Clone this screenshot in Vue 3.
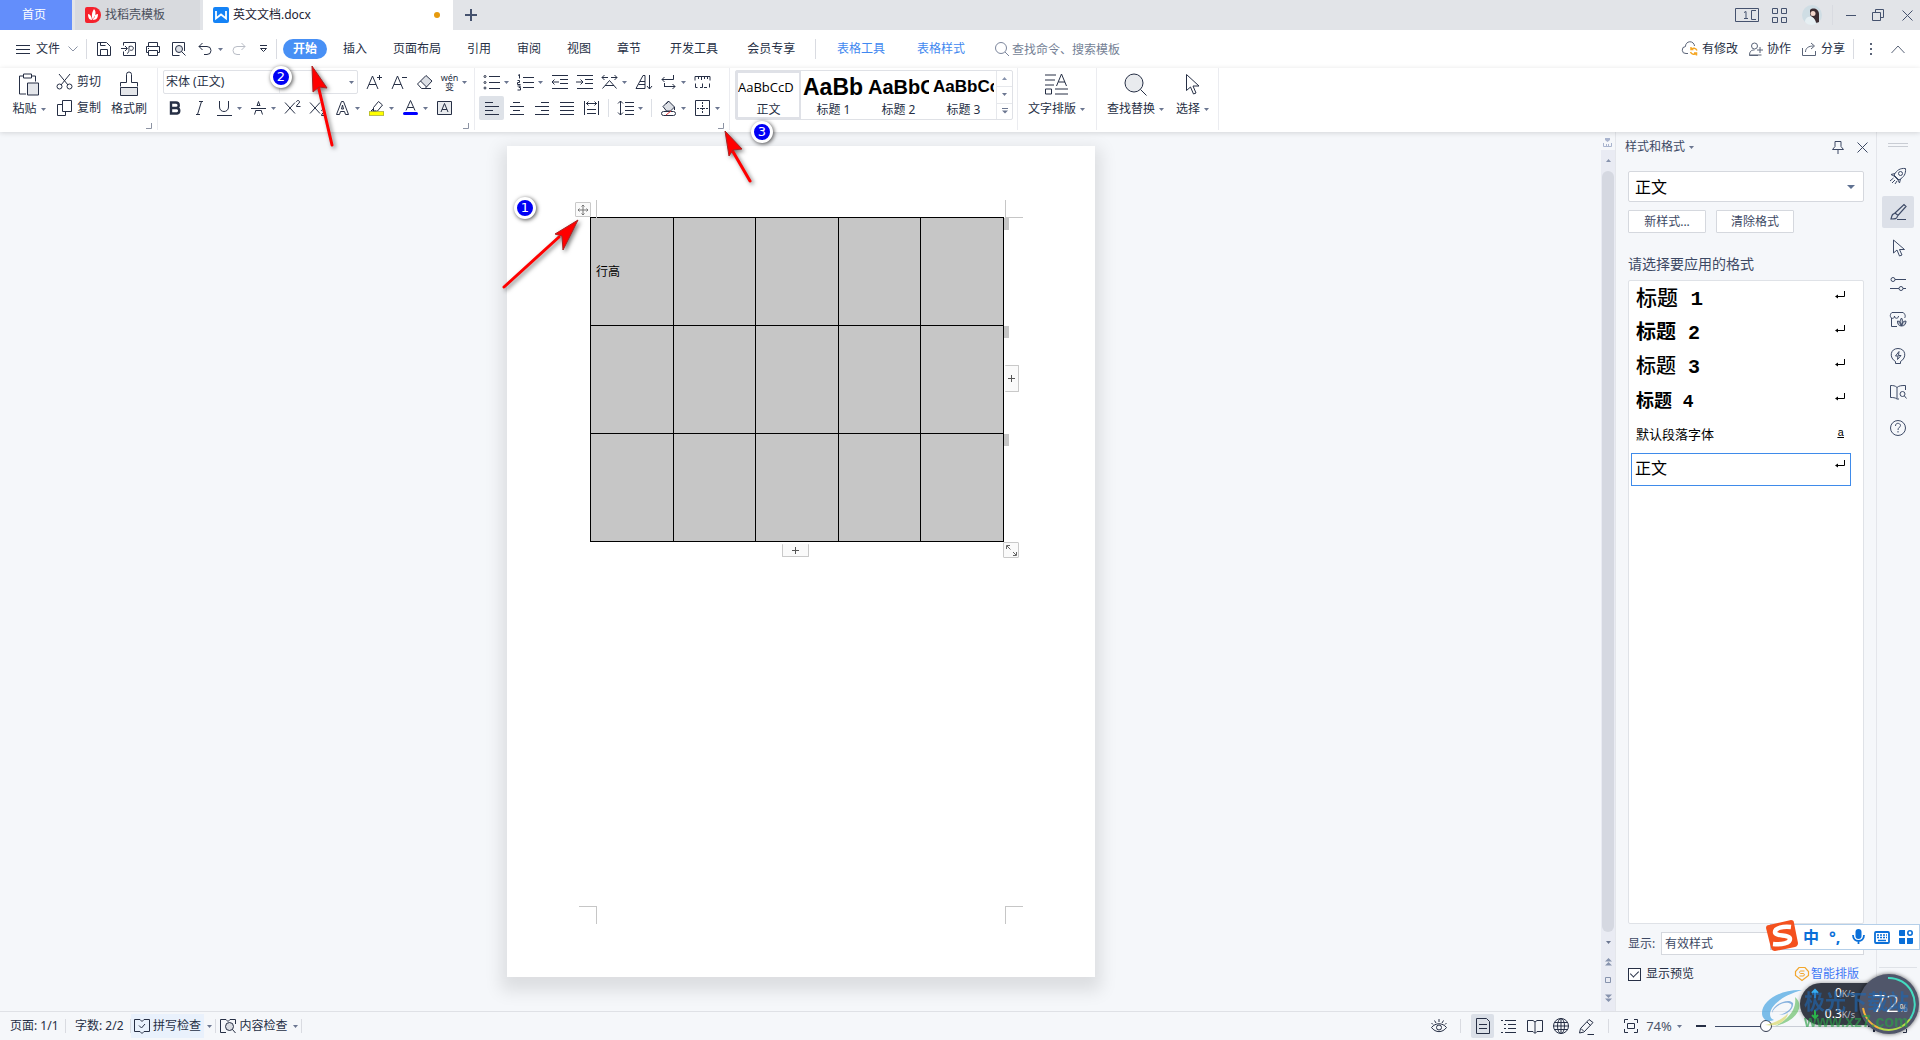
<script setup>
import { h, ref } from 'vue'

const icons = {
  docer: [16, 16, '<path d="M2 0h6a8 8 0 0 1 0 16H2a2 2 0 0 1-2-2V2a2 2 0 0 1 2-2z" fill="#f5222d" stroke="none"/><path d="M9 2c3 3 1 8-1 11C6 9 7 5 9 2zM3 7c2 0 4 3 4 6-3 0-4-3-4-6zM13 7c-3 0-4 3-5 6 4 0 5-3 5-6z" fill="#fff" stroke="none"/>'],
  wdoc: [16, 16, '<rect width="16" height="16" rx="2" fill="#1583f6" stroke="none"/><path d="M3 4v7.500l5-4 5 4V4" stroke="#fff" stroke-width="1.800"/>'],
  plus: [12, 12, '<path d="M6 0v12M0 6h12" stroke-width="2"/>'],
  layout: [24, 14, '<path d="M.5.5h23v13H.5zM21 2.500h-4.500v9H21M19 11.500h2M9 4.500l2-1v7M9 10.500h4"/>'],
  grid: [15, 15, '<path d="M.5.5h5v5h-5zM9.500.5h5v5h-5zM.5 9.500h5v5h-5zM9.500 9.500h5v5h-5z"/>'],
  avatar: [20, 20, '<circle cx="10" cy="10" r="10" fill="#cfdde4" stroke="none"/><path d="M8 5c3-3 9-1 9 4v8c-3 2-5 0-5-3l-4-4z" fill="#3b2b30" stroke="none"/><circle cx="11" cy="8.500" r="2.500" fill="#f3d6cb" stroke="none"/><path d="M3 17c0-4 3-6 7-5 2 1 4 3 4 7-4 2-9 1-11-2z" fill="#e6eff3" stroke="none"/>'],
  min: [10, 12, '<path d="M0 6.500h10"/>'],
  restore: [12, 12, '<path d="M.5 3.500h8v8h-8zM3.500 3.500v-3h8v8h-3"/>'],
  close: [11, 11, '<path d="M.5.5l10 10M10.500.5l-10 10"/>'],
  menu: [14, 11, '<path d="M0 1.500h14M0 5.500h14M0 9.500h14"/>'],
  down: [10, 6, '<path d="M.5.5L5 5 9.500.5" stroke="#8b93a5"/>'],
  up: [14, 9, '<path d="M.5 8L7 1l6.500 7"/>'],
  save: [16, 16, '<path d="M1.500 1.500h9l4 4v9h-13zM4.500 14V8.500h7V14M4.500 1.500v3h5"/>'],
  output: [16, 16, '<path d="M2.500 4.500v-3h12v13h-12v-4M0 7.500h6M4 5l2.500 2.500L4 10M6 12.500c2-1 2-2 2-7 4-1 5 1 4 3-1 1-2 1-3 .5"/>'],
  print: [16, 16, '<path d="M3.500 5V1.500h9V5M3.500 11.500h-2v-6h13v6h-2M3.500 9.500h9v5h-9zM3 7.500h1"/>'],
  preview: [16, 16, '<path d="M14.500 10V1.500h-12v13h7"/><circle cx="9" cy="8" r="3.500" fill="#dcdfe5"/><path d="M11.500 10.500l4 4"/>'],
  undo: [14, 14, '<path d="M4.500 1L1 4.500 4.500 8M1 4.500h8a4 4 0 0 1 0 8H6"/>'],
  redo: [14, 14, '<path d="M9.500 1L13 4.500 9.500 8M13 4.500H5a4 4 0 0 0 0 8h3" stroke="#b9bdc6"/>'],
  more: [9, 8, '<path d="M1 .5h7M1.500 3.500l3 3 3-3z" fill="#fff"/>'],
  search: [14, 14, '<circle cx="6" cy="6" r="5.500"/><path d="M10 10l4 4"/>'],
  cloud: [16, 14, '<path d="M6 11.500H4a3.500 3.500 0 0 1-.5-7 4.500 4.500 0 0 1 9-.5"/><path d="M15 8.500a3.500 3.500 0 0 0-6-1M8.500 10a3.500 3.500 0 0 0 6 1M9 5v2.500h2.500M14.500 13.500V11H12" stroke="#f5a623" stroke-width="1.500"/>'],
  person: [14, 14, '<circle cx="5.500" cy="4" r="3"/><path d="M9 13.500H.5c0-4 1.500-5.500 5-5.500M12.500 13H.5M11 5v6M8 8h6"/>'],
  share: [15, 14, '<path d="M.5 6v7.500h13V9M3.500 10c0-4 3-6 8-6M9 1l3.500 3L9 7"/>'],
  dots: [3, 12, '<path d="M0 1h2M0 6h2M0 11h2" stroke-width="2"/>'],
  paste: [22, 24, '<path d="M8 21.500H1.500v-18h4v-2h8v2h4V9M5.500 3.500v2h8v-2"/><path d="M9.500 10.500h11v12h-11z" fill="#e4e6ea"/>'],
  cut: [17, 16, '<path d="M3 0l9 11M14 0L5 11"/><circle cx="3.500" cy="12.500" r="2.500"/><circle cx="13.500" cy="12.500" r="2.500"/>'],
  copy: [17, 16, '<path d="M6.500.5h9v11h-9zM6 4.500H1.500v11h8V12"/>'],
  brush: [18, 25, '<path d="M.5 14.500v-4h6v-8a2 2 0 0 1 5 0v8h6v4"/><path d="M.5 15.500h17v8H.5z" fill="#e4e6ea"/>'],
  fontUp: [17, 16, '<path d="M1 15L6.500 2 12 15M3 10.500h7M11 3.500h5M13.500 1v5"/>'],
  fontDown: [17, 16, '<path d="M1 15L6.500 2 12 15M3 10.500h7M11 3.500h5"/>'],
  eraser: [17, 16, '<path d="M4.500 7L10 1.500l6 5.500-5.500 6z" fill="#dcdfe5"/><path d="M4.500 7L1.500 10l4 4.500H9l1.500-1.500M9 14.500h6"/>'],
  bold: [17, 16, '<path d="M5 2.500h5a2.700 2.700 0 0 1 0 5.500H5zM5 8h6a2.800 2.800 0 0 1 0 5.500H5z" stroke-width="2.400"/>'],
  italic: [17, 16, '<path d="M8 1.500h4M5 14.500h4M10.500 1.500l-4 13"/>'],
  underline: [17, 16, '<path d="M3.500 1v6c0 6 9 6 9 0V1M1 15.500h15"/>'],
  strike: [17, 16, '<path d="M4.500 14.500L6 10M7 6l1.500-4.500L10 6M11 10l1.500 4.500M1 8.500h15M6 10.500h5M7 5.500h3"/>'],
  sup: [17, 16, '<path d="M1 2.500l10 11M11 2.500l-10 11M12.500 2c0-2 3-2 3 0s-3 2-3 4.500h4"/>'],
  sub: [17, 16, '<path d="M1 2.500l10 11M11 2.500l-10 11M12.500 11c0-2 3-2 3 0s-3 2-3 4.500h4"/>'],
  outlineA: [17, 16, '<path d="M2.500 14.500l5-13h2l5 13h-3l-1-3h-4l-1 3zM7.500 9h2l-1-4z"/>'],
  marker: [17, 16, '<path d="M5.500 7.500l5-6 4 3.500-5 6-4 .5zM5 9l-2 2h5"/><path d="M1 13.500h15" stroke="#8a8f3a" stroke-width="4.500"/><path d="M1.500 13.500h14" stroke="#ff0" stroke-width="3.500"/>'],
  colorA: [17, 16, '<path d="M4 10.500L8.500.5l4.500 10M5.500 7.500h6"/><path d="M2.500 13.500h12" stroke="#00f" stroke-width="3" stroke-linecap="round"/>'],
  boxA: [17, 16, '<path d="M1.500 1.500h14v13h-14z" fill="#e9ebee"/><path d="M5 12l3.500-8.500L12 12M6 9.500h5"/>'],
  bullets: [17, 16, '<path d="M6 2.500h11M6 8.500h11M6 14.500h11"/><circle cx="2" cy="2.500" r="1"/><circle cx="2" cy="8.500" r="1"/><circle cx="2" cy="14" r="1"/>'],
  numbers: [17, 16, '<path d="M6 3.500h11M6 8.500h11M6 13.500h11M1 1.500l1.500-1v4M.5 6.500h2v2h-2v2h3M.5 12h3l-1.500 1.500h1.500V16H.5"/>'],
  outdent: [17, 16, '<path d="M1 1.500h16M9 5.500h8M9 9.500h8M1 14.500h16M1 8h7M3.500 5.500L1 8l2.500 2.500"/>'],
  indent: [17, 16, '<path d="M1 1.500h16M9 5.500h8M9 9.500h8M1 14.500h16M0 8h7M4.500 5.500L7 8l-2.500 2.500"/>'],
  scaleA: [17, 16, '<path d="M1.500 14.500l7-8 7 8M4 11.500h9M1 3.500h6M3.500 1L1 3.500 3.500 6M10 3.500h6M13.500 1L16 3.500 13.500 6"/>'],
  sort: [17, 16, '<path d="M1 14.500L8 1.500h2v13M1 14.500h9M3.500 10.500H10M5 7.500h5"/><path d="M14.500 1v14M12 12l2.500 3 2.500-3"/>'],
  wrap: [17, 16, '<path d="M13.500 1v4.500H2M4.500 3L2 5.500 4.500 8M4 12.500h11M12.500 10l2.500 2.500-2.500 2.500M4.500 9v3.500"/>'],
  tabs: [17, 16, '<path d="M1 6.500v-4h15v4M4.500 2.500V5M7.500 2.500V6M10.500 2.500V5M13.500 2.500V5M1.500 9.500v4h2M6 13.500h2.500v-4M10 13.500h3M15.500 9.500v4"/>'],
  left: [17, 16, '<path d="M2 2.500h8M2 6.500h14M2 10.500h8M2 14.500h14"/>'],
  center: [17, 16, '<path d="M5 2.500h7M2 6.500h14M5 10.500h7M2 14.500h14"/>'],
  right: [17, 16, '<path d="M8 2.500h8M2 6.500h14M8 10.500h8M2 14.500h14"/>'],
  justify: [17, 16, '<path d="M2 2.500h14M2 6.500h14M2 10.500h14M2 14.500h14"/>'],
  distribute: [17, 16, '<path d="M1.500 1v14M15.500 1v14M3 3.500h11M5.500 1.500L3.500 3.500l2 2M11.500 1.500l2 2-2 2M4 9.500h9M4 13.500h9"/>'],
  spacing: [17, 16, '<path d="M3.500 1v14M1 3.500L3.500 1 6 3.500M1 12.500L3.500 15 6 12.500M8 2.500h9M8 6.500h9M8 10.500h9M8 14.500h9"/>'],
  shade: [17, 16, '<path d="M3 6.500l5.500-5.500 6 6-4 4h-4z" fill="#dcdfe5"/><path d="M6 4l3-3M14.500 7v3"/><rect x="1.500" y="11.500" width="14" height="4" rx="2" fill="#fff"/><path d="M6 15l5-4" stroke="#e23a3a"/>'],
  border: [17, 16, '<path d="M1.500.5h14v15h-14z"/><path d="M8.500 2v12M3 8.500h11" stroke-dasharray="2 1"/>'],
  typeset: [24, 22, '<path d="M0 1.500h11M0 6.500h10M0 11.500h9M.5 15.500h6v5h-6zM10 15.500h13M10 20.500h13M11.500 12.500l5-12 5 12M13.500 8.500h6.500"/>'],
  find: [23, 23, '<circle cx="10" cy="10" r="9" fill="#e9ebee"/><path d="M16.500 16.500l6 6"/>'],
  cursor: [16, 22, '<path d="M1.500 1v16l4-3.500 3 7 2.500-1-3-7h6z"/>'],
  caret: [5, 3, '<path d="M0 0h5L2.500 3z" fill="#6b7690" stroke="none"/>'],
  bigCaret: [8, 4, '<path d="M0 0h8L4 4z" fill="#5f7191" stroke="none"/>'],
  caretUp: [5, 3, '<path d="M0 3h5L2.500 0z" fill="#8793ad" stroke="none"/>'],
  caretMore: [6, 6, '<path d="M0 .5h6" stroke="#6b7690"/><path d="M0 2.500h6l-3 3z" fill="#6b7690" stroke="none"/>'],
  launch: [6, 6, '<path d="M5.500 0v5.500H0" stroke="#8c93a3"/>'],
  ruler: [9, 9, '<path d="M2 0h5v2L4.500 4 2 2z" fill="#a9b4ce" stroke="none"/><path d="M.5 5v3.500h8V5M3.500 6v2M5.500 6v2" stroke="#a9b4ce"/>'],
  dblUp: [7, 8, '<path d="M0 3.500h7L3.500 0zM0 7.500h7L3.500 4z" fill="#8793ad" stroke="none"/>'],
  dblDown: [7, 8, '<path d="M0 .5h7L3.500 4zM0 4.500h7L3.500 8z" fill="#8793ad" stroke="none"/>'],
  square: [6, 6, '<path d="M.5.5h5v5h-5z" stroke="#8793ad"/>'],
  pin: [14, 13, '<path d="M4 .5h6v5l2.500 3h-11l2.500-3zM7 9v4"/>'],
  enter: [10, 9, '<path d="M9.500 0v5.500H2" stroke="#000"/><path d="M0 5.500L3 3.500v4z" fill="#000" stroke="none"/>'],
  rocket: [18, 18, '<path d="M5 8c3-5 6-7 11.500-6.500C17 7 15 10 10 13z"/><circle cx="11.500" cy="6.500" r="2"/><path d="M6 6.500l-4 1 3 1.500 4 4 1.500 3 1-4M4.500 11L1 14M6 13l-3 3M8 14l-2 3"/>'],
  pen: [18, 18, '<path d="M6 10l9-8.500 2 2-8 9zM6 10.500c-3 0-3 2-4 5.500 4 0 6 0 6.500-3M8 16.500h9" stroke-width="1.200"/>'],
  pointer: [18, 18, '<path d="M4.500 1v13l3.500-3 2.500 6 2.500-1-2.500-5.500h5z"/>'],
  sliders: [18, 18, '<circle cx="4" cy="4.500" r="2"/><path d="M6 4.500h11M1 13.500h9M14 13.500h3"/><circle cx="12" cy="13.500" r="2"/>'],
  shop: [18, 18, '<path d="M2.500 7v8.500H8M2.500 7C0 5 2 2 3 1.500h11c2 1 3 4 1.500 5.500M2.500 7c1.500 1 3 0 3-2 0 3 4 3 4 0"/><path d="M12.500 7c2 3 1 6 0 8-2-2-2-5 0-8zM8.500 10c2 0 4 2 4 5-3 0-4-2-4-5zM17 10c-3 0-4 2-4.500 5 3 0 4.500-2 4.500-5z" fill="#c7ccd6"/>'],
  bulb: [18, 18, '<path d="M6.500 14.500C0 11 1 1.500 9 1.500s9 9.500 2.500 13v2h-5zM10 4.500L6.500 9H9l-.5 3.500L12 8.500H9.500z"/>'],
  reader: [18, 18, '<path d="M8 15.500V4.500C6 2.500 4 2.500 1.500 2.500v12c2.500 0 4.500 0 6.500 1.500h2M8 4.500c2-2 5-2 8.500-2V7"/><circle cx="13.500" cy="11" r="2.500"/><path d="M15.500 13l2 2.500"/>'],
  help: [18, 18, '<circle cx="9" cy="9" r="7.500"/><path d="M6.500 7c0-4 5-3 5-.5C11.500 8.500 9 8 9 11M9 12v1.500" />'],
  spell: [16, 16, '<path d="M6 1.500H.5v12H6l2 2 2-2h5.500v-12H10l-2 2-2-2M5 7.500L7.500 10 11 6"/>'],
  content: [16, 16, '<path d="M6 1.500H.5v13H6M10 1.500h5.500V6M6 1.500l2 2 2-2"/><circle cx="9.500" cy="8.500" r="4" fill="#d9dce2"/><path d="M12.500 11.500l3 3.500"/>'],
  eye: [16, 16, '<path d="M.5 9.500c4-5 11-5 15 0-4 5.500-11 5.500-15 0zM8 1v3M3.500 2.500L5 5M12.500 2.500L11 5M.5 5L2 6.500M15.500 5L14 6.500"/><circle cx="8" cy="9.500" r="2.500"/>'],
  docview: [14, 16, '<path d="M.5.5h10l3 3v12H.5zM3 6.500h8M3 10.500h8"/>'],
  outline: [15, 15, '<path d="M0 1.500h2M4 1.500h11M3 5.500h2M7 5.500h8M3 9.500h2M7 9.500h8M0 13.500h2M4 13.500h11"/>'],
  book: [16, 15, '<path d="M8 3L6 1.500H.5v11H6L8 14.500l2-2h5.500v-11H10zV14"/>'],
  globe: [16, 16, '<circle cx="8" cy="8" r="7.500"/><ellipse cx="8" cy="8" rx="3.500" ry="7.500"/><path d="M.5 8h15M8 .5v15M2 4.500h12M2 11.500h12"/>'],
  write: [17, 17, '<path d="M11 1.500l4 3-9 9.500-4.500 1 1-4.500zM9.500 16.500H16M9 4l3.500 3.500M3 10.500L5.500 13"/>'],
  fit: [14, 14, '<path d="M.5 4V.5H4M10 .5h3.500V4M13.500 10v3.500H10M4 13.500H.5V10M3.500 4.500h7v5h-7z"/>'],
  minus: [10, 4, '<path d="M0 2h10" stroke-width="2"/>'],
  smart: [14, 14, '<path d="M4 .5h6l3.500 4v4L7 13.500.5 8.500v-4z" stroke="#f2a62c" stroke-width="1.200"/><path d="M9.500 4H6c-2 0-2 2.500 0 2.500h2c2 0 2 2.500 0 2.500H4.500" stroke="#f2a62c"/>'],
  move: [12, 12, '<path d="M6 1v10M1 6h10M4.500 2.500L6 1l1.500 1.500M4.500 9.500L6 11l1.500-1.500M2.500 4.500L1 6l1.500 1.500M9.500 4.500L11 6 9.500 7.500" stroke="#777"/>'],
  add: [7, 7, '<path d="M3.500 0v7M0 3.500h7" stroke="#555"/>'],
  resize: [11, 11, '<path d="M.5 4V.5H4M1 1l3.500 3.500M10.500 7v3.500H7M10 10L7 7" stroke="#666"/>'],
  sogou: [32, 31, '<path d="M3 5L25 0q3 0 3 3l4 20q0 3-3 4L9 31q-3 0-4-3L0 8q0-3 3-3z" fill="#f4511e" stroke="none"/><path d="M25 7C17 6 9 8 9 12c0 5 15 2 15 7 0 4-8 6-17 5" stroke="#fff" stroke-width="4.500"/>'],
  mic: [13, 16, '<rect x="3.500" y="0" width="6" height="10" rx="3" fill="#0a6fd8" stroke="none"/><path d="M1 6c0 8 11 8 11 0M6.500 12v3" stroke="#0a6fd8" stroke-width="1.800"/>'],
  keyboard: [16, 13, '<rect x="1" y="1" width="14" height="11" rx="1" stroke="#0a6fd8" stroke-width="1.800"/><path d="M3 4h10M3 6.500h10" stroke="#0a6fd8" stroke-width="1.500" stroke-dasharray="2 1"/><path d="M4 9.500h8" stroke="#0a6fd8" stroke-width="1.500"/>'],
  tools: [14, 14, '<path d="M0 1q0-1 1-1h5v6H1q-1 0-1-1zM0 8h6v6H1q-1 0-1-1zM8 8h6v5q0 1-1 1H8z" fill="#0a6fd8" stroke="none"/><circle cx="11" cy="3" r="2.200" stroke="#0a6fd8" stroke-width="1.600"/>'],
  arrUp: [8, 9, '<path d="M4 9V1M1 4l3-3 3 3" stroke="#38b0f5" stroke-width="2"/>'],
  arrDown: [8, 9, '<path d="M4 0v8M1 5l3 3 3-3" stroke="#2ab54a" stroke-width="2"/>']
}

const Icon = (props) => {
  const [w, hgt, body] = icons[props.n]
  return h('svg', {
    class: 'ico', width: w, height: hgt, viewBox: `0 0 ${w} ${hgt}`,
    fill: 'none', stroke: 'currentColor', 'aria-hidden': 'true', innerHTML: body
  })
}
Icon.props = ['n']

const quick = ['save', 'output', 'print', 'preview']
const tabs = [
  { t: '开始', on: true }, { t: '插入' }, { t: '页面布局' }, { t: '引用' }, { t: '审阅' },
  { t: '视图' }, { t: '章节' }, { t: '开发工具', wide: true }, { t: '会员专享' }
]
// "v" marks a drop-down caret, "|" a divider
const fontRow1 = ['fontUp', 'fontDown', 'eraser', 'wen', 'v']
const fontRow2 = ['bold', 'italic', 'underline', 'v', 'strike', 'v', 'sup', 'sub', 'outlineA', 'v', 'marker', 'v', 'colorA', 'v', 'boxA']
const paraRow1 = ['bullets', 'v', 'numbers', 'v', 'outdent', 'indent', 'scaleA', 'v', 'sort', 'wrap', 'v', 'tabs']
const paraRow2 = ['left', 'center', 'right', 'justify', 'distribute', '|', 'spacing', 'v', '|', 'shade', 'v', 'border', 'v']
const gallery = [
  { s: 'AaBbCcD', t: '正文', c: 'g0' },
  { s: 'AaBb', t: '标题 1', c: 'g1' },
  { s: 'AaBbC', t: '标题 2', c: 'g2' },
  { s: 'AaBbCc', t: '标题 3', c: 'g3' }
]
const styles = [
  { t: '标题', d: '1', c: 's1' }, { t: '标题', d: '2', c: 's2' }, { t: '标题', d: '3', c: 's3' },
  { t: '标题', d: '4', c: 's4' }, { t: '默认段落字体', c: 's5' }, { t: '正文', c: 's6' }
]
const rail = ['rocket', 'pen', 'pointer', 'sliders', 'shop', 'bulb', 'reader', 'help']
const preview = ref(true)
const zoom = ref(34)
</script>

<template>
  <div class="app">
    <header class="titlebar">
      <button class="tab home">首页</button>
      <button class="tab docer"><Icon n="docer" />找稻壳模板</button>
      <button class="tab active"><Icon n="wdoc" />英文文档.docx<i class="dot"></i></button>
      <button class="newtab" aria-label="新建"><Icon n="plus" /></button>
      <div class="winctl">
        <button aria-label="布局"><Icon n="layout" /></button>
        <button aria-label="应用"><Icon n="grid" /></button>
        <button aria-label="账户"><Icon n="avatar" /></button>
        <i class="vline"></i>
        <button aria-label="最小化"><Icon n="min" /></button>
        <button aria-label="还原"><Icon n="restore" /></button>
        <button aria-label="关闭"><Icon n="close" /></button>
      </div>
    </header>

    <nav class="menubar">
      <button class="file"><Icon n="menu" /><span>文件</span><Icon n="down" /></button>
      <i class="vline"></i>
      <div class="quick">
        <button v-for="q in quick" :key="q" :aria-label="q"><Icon :n="q" /></button>
        <button class="undo" aria-label="撤销"><Icon n="undo" /><Icon n="caret" /></button>
        <button aria-label="恢复"><Icon n="redo" /></button>
        <button aria-label="更多"><Icon n="more" /></button>
      </div>
      <i class="vline"></i>
      <div class="tabs">
        <button v-for="t in tabs" :key="t.t" :class="{ on: t.on, wide: t.wide }">{{ t.t }}</button>
      </div>
      <i class="vline"></i>
      <div class="ctx"><button>表格工具</button><button>表格样式</button></div>
      <label class="seek"><Icon n="search" /><input type="text" placeholder="查找命令、搜索模板" /></label>
      <div class="share">
        <button><Icon n="cloud" />有修改</button>
        <button><Icon n="person" />协作</button>
        <button><Icon n="share" />分享</button>
        <i class="vline"></i>
        <button aria-label="更多"><Icon n="dots" /></button>
        <button aria-label="折叠"><Icon n="up" /></button>
      </div>
    </nav>

    <section class="ribbon">
      <div class="group clip">
        <button class="big"><Icon n="paste" /><span class="lab">粘贴<Icon n="caret" /></span></button>
        <div class="pair">
          <button><Icon n="cut" />剪切</button>
          <button><Icon n="copy" />复制</button>
        </div>
        <button class="big"><Icon n="brush" /><span class="lab">格式刷</span></button>
        <Icon n="launch" class="launch" />
      </div>
      <div class="group font">
        <div class="row">
          <div class="combo">
            <select aria-label="字体"><option>宋体 (正文)</option></select>
            <select aria-label="字号" class="size"><option></option></select>
            <Icon n="caret" />
          </div>
          <template v-for="(k, i) in fontRow1" :key="i">
            <span v-if="k === 'v'" class="car"><Icon n="caret" /></span>
            <button v-else-if="k === 'wen'" class="slot wen"><span>wén</span><span>变</span></button>
            <button v-else class="slot" :aria-label="k"><Icon :n="k" /></button>
          </template>
        </div>
        <div class="row">
          <template v-for="(k, i) in fontRow2" :key="i">
            <span v-if="k === 'v'" class="car"><Icon n="caret" /></span>
            <button v-else class="slot" :aria-label="k"><Icon :n="k" /></button>
          </template>
        </div>
        <Icon n="launch" class="launch" />
      </div>
      <div class="group para">
        <div v-for="(r, j) in [paraRow1, paraRow2]" :key="j" class="row">
          <template v-for="(k, i) in r" :key="i">
            <span v-if="k === 'v'" class="car"><Icon n="caret" /></span>
            <span v-else-if="k === '|'" class="bar"></span>
            <button v-else class="slot" :class="{ on: k === 'left' }" :aria-label="k"><Icon :n="k" /></button>
          </template>
        </div>
        <Icon n="launch" class="launch" />
      </div>
      <div class="group gal">
        <div class="gallery">
          <button v-for="(g, i) in gallery" :key="g.t" class="gcell" :class="{ sel: i === 0 }">
            <span class="sample" :class="g.c">{{ g.s }}</span><span class="gname">{{ g.t }}</span>
          </button>
          <div class="gscroll">
            <button aria-label="上"><Icon n="caretUp" /></button>
            <button aria-label="下"><Icon n="caret" /></button>
            <button aria-label="更多"><Icon n="caretMore" /></button>
          </div>
        </div>
      </div>
      <div class="group type">
        <button class="big"><Icon n="typeset" /><span class="lab">文字排版<Icon n="caret" /></span></button>
      </div>
      <div class="group edit">
        <button class="big"><Icon n="find" /><span class="lab">查找替换<Icon n="caret" /></span></button>
        <button class="big"><Icon n="cursor" /><span class="lab">选择<Icon n="caret" /></span></button>
      </div>
    </section>

    <main class="work">
      <div class="canvas">
        <article class="page">
          <table>
            <tbody>
              <tr v-for="r in 3" :key="r">
                <td v-for="c in 5" :key="c">{{ r === 1 && c === 1 ? '行高' : '' }}</td>
              </tr>
            </tbody>
          </table>
          <i class="mark tl"></i><i class="mark tr"></i><i class="mark bl"></i><i class="mark br"></i>
          <i v-for="r in 3" :key="r" class="rowend" :class="'re' + r"></i>
          <button class="handle mv" aria-label="移动"><Icon n="move" /></button>
          <button class="handle col" aria-label="添加列"><Icon n="add" /></button>
          <button class="handle rw" aria-label="添加行"><Icon n="add" /></button>
          <button class="handle rs" aria-label="调整"><Icon n="resize" /></button>
          <span class="badge b1">1</span>
          <svg class="arrow a1" width="84" height="78" viewBox="0 0 84 78">
            <path d="M5 71L60 21" stroke="#f00" stroke-width="3" stroke-linecap="round" /><path d="M79 4L56 18l7 2 1 14z" fill="#f00" stroke="#a22" />
          </svg>
        </article>
      </div>
      <div class="vscroll">
        <div class="rul"><Icon n="ruler" /></div>
        <div class="track">
          <span class="arr"><Icon n="caretUp" /></span>
          <span class="thumb"></span>
          <span class="arr low"><Icon n="caret" /></span>
          <span class="ctl"><Icon n="dblUp" /></span>
          <span class="ctl"><Icon n="square" /></span>
          <span class="ctl"><Icon n="dblDown" /></span>
        </div>
      </div>
      <aside class="panel">
        <div class="phead"><span>样式和格式</span><Icon n="caret" /><button class="pin" aria-label="固定"><Icon n="pin" /></button><button aria-label="关闭"><Icon n="close" /></button></div>
        <div class="pcombo"><select aria-label="当前样式"><option>正文</option></select><Icon n="bigCaret" /></div>
        <div class="pbtns"><button>新样式...</button><button>清除格式</button></div>
        <h2>请选择要应用的格式</h2>
        <ul class="slist">
          <li v-for="s in styles" :key="s.c" :class="[s.c, { cur: s.t === '正文' }]">
            <span>{{ s.t }}<b v-if="s.d">&nbsp;{{ s.d }}</b></span><u v-if="s.c === 's5'">a</u><Icon v-else n="enter" />
          </li>
        </ul>
        <div class="show"><label for="show">显示:</label><select id="show"><option>有效样式</option></select></div>
        <div class="foot">
          <label><input v-model="preview" type="checkbox" />显示预览</label>
          <a href="#"><Icon n="smart" />智能排版</a>
        </div>
      </aside>
      <aside class="rail">
        <i class="grip"></i>
        <button v-for="r in rail" :key="r" :class="{ on: r === 'pen' }" :aria-label="r"><Icon :n="r" /></button>
        <svg class="dots3" width="38" height="44" viewBox="0 0 38 44" fill="none" stroke="currentColor" aria-hidden="true">
          <circle cx="13" cy="25" r="2" /><circle cx="19" cy="25" r="2" /><circle cx="25" cy="25" r="2" />
        </svg>
      </aside>
    </main>

    <footer class="status">
      <span class="pg">页面: 1/1</span><i class="vline"></i>
      <span class="wc">字数: 2/2</span><i class="vline"></i>
      <button class="spell"><Icon n="spell" />拼写检查</button><span class="sc"><Icon n="caret" /></span><i class="vline"></i>
      <button class="cont"><Icon n="content" />内容检查</button><span class="sc"><Icon n="caret" /></span><i class="vline"></i>
      <div class="views">
        <button aria-label="护眼"><Icon n="eye" /></button>
        <i class="vline"></i>
        <button class="on" aria-label="页面视图"><Icon n="docview" /></button>
        <button aria-label="大纲"><Icon n="outline" /></button>
        <button aria-label="阅读"><Icon n="book" /></button>
        <button aria-label="Web"><Icon n="globe" /></button>
        <button aria-label="写作"><Icon n="write" /></button>
        <i class="vline"></i>
        <button aria-label="适合"><Icon n="fit" /></button>
        <button class="pct">74%<Icon n="caret" /></button>
        <button class="mn" aria-label="缩小"><Icon n="minus" /></button>
        <input v-model="zoom" class="range" type="range" min="0" max="100" aria-label="缩放" />
        <button aria-label="放大"><Icon n="plus" /></button>
        <button aria-label="全屏"><Icon n="fit" /></button>
      </div>
    </footer>

    <span class="badge b2">2</span>
    <svg class="arrow a2" width="34" height="90" viewBox="0 0 34 90">
      <path d="M12 22L26 82" stroke="#f00" stroke-width="3" stroke-linecap="round" /><path d="M6 3L7 29l6-5 8 1z" fill="#f00" stroke="#a22" />
    </svg>
    <span class="badge b3">3</span>
    <svg class="arrow a3" width="40" height="62" viewBox="0 0 40 62">
      <path d="M12 22L30 53" stroke="#f00" stroke-width="3" stroke-linecap="round" /><path d="M5 3L9 28l4-6 9-1z" fill="#f00" stroke="#a22" />
    </svg>

    <div class="ime">
      <Icon n="sogou" /><b>中</b><b class="punc">°,</b><Icon n="mic" /><Icon n="keyboard" /><Icon n="tools" />
    </div>
    <div class="meter">
      <div class="pill">
        <span><Icon n="arrUp" /><em>0<small>K/s</small></em></span>
        <span><Icon n="arrDown" /><em>0.3<small>K/s</small></em></span>
      </div>
      <div class="dial">
        <svg width="60" height="60" viewBox="0 0 60 60" fill="none" stroke-width="2">
          <path d="M29 4A26 26 0 0 1 51 45" stroke="#43dcc0" /><path d="M51 45A26 26 0 0 1 20 54" stroke="#b6dc4a" /><path d="M20 54A26 26 0 0 1 4 34" stroke="#f7b23c" />
        </svg>
        <span>72<small>%</small></span>
      </div>
    </div>
    <div class="wm">
      <svg width="44" height="38" viewBox="0 0 44 38">
        <path d="M42 1C20 0 2 12 2 24c0 6 5 10 12 7C5 28 10 10 42 1z" fill="#3a9fe0" /><path d="M12 24c2-7 13-13 19-9 2 3-3 9-12 11 8 0 15-6 14-12-5-6-21 2-21 10z" fill="#4f8fd0" /><path d="M35 8c10 8 3 24-20 29 14-7 22-17 20-29z" fill="#62bd62" /><path d="M5 36c10-2 18-6 23-12-1 9-12 14-23 12z" fill="#d8d860" />
      </svg>
      <div><b>极光下载站</b><strong>www.xz7.com</strong></div>
    </div>
  </div>
</template>

<style>
body { margin: 0; }
</style>

<style scoped>
.app, .app * { box-sizing: border-box; }
.app {
  position: relative; min-height: 100vh; display: flex; flex-direction: column; overflow: hidden;
  font: 12px/16px "Noto Sans", "Noto Sans CJK SC", sans-serif; color: #262f45; background: #f5f7fa;
}
button, input, select { font: inherit; color: inherit; margin: 0; padding: 0; border: 0; background: none; appearance: none; outline: 0; }
button { display: flex; align-items: center; justify-content: center; white-space: nowrap; }
.ico { display: block; flex: none; overflow: visible; }
.vline { width: 1px; height: 20px; background: #d9dbe1; flex: none; }

.titlebar { height: 30px; display: flex; background: #e2e4e8; color: #45526e; }
.tab { height: 30px; justify-content: flex-start; gap: 4px; }
.home { width: 72px; padding-left: 22px; background: #638efb; color: #fff; margin-right: 3px; }
.docer { width: 125px; padding-left: 10px; background: #d8dade; color: #4a4f5c; margin-right: 3px; }
.active { width: 250px; padding: 0 13px 0 10px; background: #fff; color: #1c2233; }
.dot { width: 6px; height: 6px; border-radius: 3px; background: #e69a0d; margin-left: auto; }
.newtab { width: 36px; }
.winctl { margin-left: auto; display: flex; align-items: center; padding-right: 7px; }
.winctl button { height: 30px; }
.winctl button:nth-child(2) { margin-left: 13px; }
.winctl button:nth-child(3) { margin: 0 10px 0 15px; }
.winctl button:nth-child(5) { margin-left: 13px; }
.winctl button:nth-child(6) { margin: 0 18px 0 16px; }

.menubar { height: 38px; display: flex; align-items: center; background: #fff; padding-left: 16px; }
.file { gap: 6px; width: 70px; justify-content: flex-start; }
.file .ico:last-child { margin-left: 2px; }
.quick { display: flex; padding-left: 5px; width: 189px; }
.quick button { width: 25px; height: 24px; }
.quick .undo { width: 34px; gap: 6px; margin-left: 4px; }
.tabs { display: flex; padding-left: 6px; width: 538px; }
.tabs button { height: 20px; padding: 0 13px; }
.tabs .wide { padding: 0 16px; }
.tabs .on { padding: 0 10px; margin-right: 3px; border-radius: 10px; background: #4890f5; color: #fff; font-weight: 700; }
.ctx { display: flex; gap: 32px; padding: 0 30px 0 21px; color: #3f88f0; }
.seek { display: flex; align-items: center; gap: 3px; color: #7c869c; }
.seek input { width: 130px; height: 20px; }
.seek input::placeholder { color: #747f95; opacity: 1; }
.share { margin-left: auto; display: flex; align-items: center; padding-right: 15px; color: #505a70; }
.share button { gap: 4px; color: #262f45; margin-right: 11px; }
.share button .ico { color: #5a6478; }
.share .vline + button { margin: 0 18px 0 16px; }
.share button:last-child { margin: 0; }
.share .vline { margin-left: -3px; }

.ribbon { height: 64px; display: flex; background: #fff; box-shadow: 0 1px 5px rgba(0, 0, 0, .14); position: relative; z-index: 1; }
.group { position: relative; height: 62px; border-right: 1px solid #ebecf0; flex: none; padding-top: 1px; }
.launch { position: absolute; right: 5px; bottom: 1px; }
.clip { width: 158px; display: flex; padding-left: 9px; }
.big { flex-direction: column; align-items: center; justify-content: flex-start; height: 52px; }
.big > .ico { height: 31px; margin-bottom: 1px; }
.lab { display: flex; align-items: center; gap: 4px; height: 16px; }
.clip .big:first-child { width: 40px; }
.pair { margin-left: 7px; display: flex; flex-direction: column; width: 52px; }
.pair button { height: 26px; gap: 4px; justify-content: flex-start; }
.pair + .big { width: 42px; }
.row { display: flex; height: 26px; align-items: center; }
.slot { width: 25px; height: 24px; border-radius: 2px; flex: none; }
.slot.on { background: #dee2e8; }
.car { width: 9px; flex: none; }
.bar { width: 9px; height: 18px; border-left: 1px solid #dcdfe5; margin-left: 4px; margin-right: -4px; flex: none; }
.font { width: 317px; padding-left: 4px; }
.combo { width: 195px; height: 24px; display: flex; align-items: center; border: 1px solid #dfe1e6; border-radius: 2px; margin: 0 4px 0 1px; padding-right: 3px; flex: none; }
.combo select { height: 22px; width: 115px; padding-left: 2px; }
.combo .size { flex: 1; border-left: 1px solid #eceef1; }
.wen { flex-direction: column; font-size: 9px; line-height: 9px; }
.para { width: 255px; padding-left: 4px; }
.gal { width: 288px; padding: 2px 0 0 5px; }
.gallery { display: flex; width: 278px; height: 50px; border: 1px solid #dfe1e6; border-radius: 2px; }
.gcell { width: 65px; flex-direction: column; padding: 0 2px; overflow: hidden; align-items: flex-start; justify-content: flex-start; }
.gcell.sel { box-shadow: inset 0 0 0 2px #dfe1e7; }
.sample { height: 32px; line-height: 32px; width: 100%; overflow: hidden; text-align: left; color: #000; font-weight: 700; font-family: "Liberation Sans", sans-serif; }
.gname { align-self: center; height: 14px; line-height: 14px; }
.g0 { font: 400 13px/32px "Open Sans", sans-serif; }
.g1 { font-size: 23px; }
.g2 { font-size: 20px; }
.g3 { font-size: 17px; }
.gscroll { flex: 1; display: flex; flex-direction: column; border-left: 1px solid #e6e8ec; }
.gscroll button { flex: 1; }
.gscroll button + button { border-top: 1px solid #e6e8ec; }
.type { width: 79px; padding-left: 10px; }
.edit { width: 122px; display: flex; padding-left: 10px; gap: 12px; }

.work { flex: 1; display: flex; }
.canvas { flex: 1; display: flex; justify-content: center; align-items: flex-start; padding: 14px 0 30px 1px; }
.page { position: relative; width: 588px; height: 831px; padding: 71px 83px; background: #fff; box-shadow: 0 8px 16px 6px rgba(0, 0, 0, .1); }
table { border-collapse: collapse; table-layout: fixed; width: 414px; background: #c6c6c6; }
td { height: 108px; border: 1px solid #000; padding: 0 5px; vertical-align: middle; font-size: 12px; color: #000; }
.mark { position: absolute; width: 18px; height: 18px; border: 0 solid #c6c6c6; }
.tl { left: 72px; top: 54px; border-right-width: 1px; }
.tr { left: 498px; top: 54px; border-left-width: 1px; border-bottom-width: 1px; }
.bl { left: 72px; top: 760px; border-right-width: 1px; border-top-width: 1px; }
.br { left: 498px; top: 760px; border-left-width: 1px; border-top-width: 1px; }
.rowend { position: absolute; left: 497px; width: 5px; height: 12px; background: #c6c6c6; }
.re1 { top: 72px; }
.re2 { top: 180px; }
.re3 { top: 288px; }
.handle { position: absolute; background: #fafafa; border: 1px solid #c9c9c9; border-radius: 1px; }
.mv { left: 68px; top: 56px; width: 16px; height: 15px; }
.col { left: 498px; top: 219px; width: 14px; height: 27px; border-left: 0; }
.rw { left: 275px; top: 398px; width: 27px; height: 13px; border-top: 0; }
.rs { left: 496px; top: 396px; width: 16px; height: 16px; }
.badge { position: absolute; z-index: 3; width: 22px; height: 22px; border: 3px solid #fff; border-radius: 50%; background: #0000f5; color: #fff; font: 13px/16px "DejaVu Sans", sans-serif; text-align: center; box-shadow: 1px 1px 4px rgba(0, 0, 0, .7); }
.b1 { left: 7px; top: 51px; }
.b2 { left: 270px; top: 66px; }
.b3 { left: 751px; top: 121px; }
.arrow { position: absolute; z-index: 3; fill: none; filter: drop-shadow(2px 2px 2px rgba(0, 0, 0, .5)); }
.a1 { left: -8px; top: 70px; }
.a2 { left: 306px; top: 63px; }
.a3 { left: 720px; top: 128px; }

.vscroll { width: 14px; display: flex; flex-direction: column; }
.rul { height: 18px; padding: 6px 0 0 2px; }
.track { flex: 1; background: #e9ebf3; display: flex; flex-direction: column; align-items: center; }
.arr { height: 21px; display: flex; align-items: center; }
.thumb { flex: 1; width: 12px; border-radius: 6px; background: #d5d8e1; }
.low { height: 21px; }
.ctl { height: 18px; display: flex; align-items: center; }
.ctl:last-child { margin-bottom: 4px; }

.panel { width: 261px; border-left: 1px solid #e4e6eb; padding: 0 12px 0 12px; display: flex; flex-direction: column; color: #3d4964; }
.phead { height: 30px; display: flex; align-items: center; gap: 4px; margin-left: -3px; }
.phead .pin { margin: 0 8px 0 auto; }
.phead button:last-child { margin-right: -4px; }
.pcombo { height: 31px; margin-top: 9px; display: flex; align-items: center; background: #fff; border: 1px solid #d5d8de; border-radius: 2px; padding-right: 8px; }
.pcombo select { flex: 1; padding-left: 6px; font-size: 16px; line-height: 28px; height: 29px; color: #000; }
.pbtns { display: flex; gap: 10px; margin-top: 8px; }
.pbtns button { width: 78px; height: 23px; background: #fff; border: 1px solid #d5d8de; border-radius: 1px; }
h2 { margin: 21px 0 0; font-size: 14px; line-height: 20px; font-weight: 400; }
.slist { list-style: none; margin: 6px 0 0; padding: 2px 12px 0 2px; flex: 1; background: #fff; border: 1px solid #dfe2e7; border-radius: 2px; color: #000; }
.slist li { height: 34px; padding: 0 5px 0 4px; display: flex; align-items: center; justify-content: space-between; border: 1px solid transparent; font-family: "Liberation Mono", "Noto Sans CJK SC", monospace; font-weight: 700; }
.slist .ico { margin-bottom: 10px; }
.slist b { font-weight: 700; }
.slist .s1 { font-size: 21px; }
.slist .s2, .slist .s3 { font-size: 20px; }
.slist .s4 { font-size: 18px; }
.slist .s1, .slist .s3 { font-weight: 500; }
.slist .s5 { font-size: 13px; font-weight: 400; }
.slist .s5 u { font-size: 11px; margin: 0 1px 6px 0; }
.slist .s6 { font-size: 16px; font-weight: 400; padding-left: 3px; }
.slist .cur { border-color: #3f8bea; height: 33px; }
.show { display: flex; align-items: center; margin-top: 8px; gap: 6px; }
.show select { flex: 1; height: 23px; background: #fff; border: 1px solid #d5d8de; padding-left: 3px; }
.show label { width: 27px; white-space: nowrap; }
.foot { display: flex; justify-content: space-between; align-items: center; margin: 11px 5px 29px 0; height: 16px; }
.foot label { display: flex; align-items: center; gap: 5px; color: #262f45; }
.foot input { width: 13px; height: 13px; border: 1px solid #262f45; background: #fff; position: relative; }
.foot input:checked::after { content: ""; position: absolute; left: 3px; top: 0; width: 4px; height: 7px; border: solid #262f45; border-width: 0 1px 1px 0; transform: rotate(45deg); }
.foot a { display: flex; gap: 2px; align-items: center; color: #3f78f5; text-decoration: none; }

.rail { width: 44px; border-left: 1px solid #e4e6eb; display: flex; flex-direction: column; align-items: center; padding: 11px 2px 0 0; color: #3d4a66; }
.grip { width: 20px; height: 4px; border: solid #c9cdd4; border-width: 1px 0; margin-bottom: 13px; }
.rail button { width: 32px; height: 32px; margin-bottom: 4px; border-radius: 2px; }
.rail .on { background: #dce0e8; }
.dots3 { margin-top: auto; border-top: 1px solid #dfe2e7; }

.status { height: 29px; display: flex; align-items: center; border-top: 1px solid #dfe1e6; padding-left: 10px; }
.status .vline { height: 14px; }
.pg { width: 55px; }
.wc { width: 64px; padding-left: 9px; }
.spell { width: 73px; height: 24px; gap: 3px; background: #e9f1fc; }
.cont { width: 72px; height: 24px; gap: 3px; margin-left: 2px; }
.sc { width: 11px; display: flex; justify-content: center; }
.views { margin-left: auto; display: flex; align-items: center; padding-right: 6px; }
.views button { width: 23px; height: 24px; margin-right: 3px; }
.views .vline { margin: 0 10px 0 7px; }
.views .on { background: #dbe0e8; border-radius: 2px; }
.views .pct { width: 38px; gap: 5px; margin-right: 6px; color: #4a5468; font-size: 13px; }
.views .mn { margin-right: 3px; }
.range { width: 145px; height: 14px; margin-right: 2px; background: linear-gradient(to right, #3d4a66 50px, #c9cdd6 50px) center / 100% 1px no-repeat; }
.range::-webkit-slider-thumb { appearance: none; width: 12px; height: 12px; border: 1px solid #333c50; border-radius: 50%; background: #fff; }

.ime { position: absolute; z-index: 2; right: 0; bottom: 90px; width: 150px; height: 26px; display: flex; align-items: center; gap: 9px; background: #fff; border: 1px solid #b4cfe9; color: #0a6fd8; }
.ime .ico:first-child { margin: -4px 0 0 -5px; }
.ime b { font-size: 16px; line-height: 24px; width: 16px; margin-left: -4px; }
.ime .punc { margin-left: 1px; width: 14px; }
.meter { position: absolute; z-index: 2; right: 1px; bottom: 6px; width: 119px; height: 60px; display: flex; align-items: center; }
.pill { width: 90px; height: 42px; border-radius: 21px 0 0 21px; background: #353a45; color: #fff; padding-left: 11px; box-shadow: 0 0 4px rgba(0, 0, 0, .4); }
.pill span { display: flex; align-items: center; height: 21px; width: 44px; justify-content: space-between; }
.pill em { font-style: normal; }
.pill small { font-size: 9px; color: #b9bdc6; }
.dial { position: absolute; right: 0; top: 0; width: 60px; height: 60px; border-radius: 50%; background: #50566a; color: #fff; box-shadow: 0 0 4px rgba(0, 0, 0, .6); }
.dial span { position: absolute; left: 13px; top: 14px; font-size: 24px; line-height: 30px; font-weight: 300; white-space: nowrap; }
.dial small { font-size: 10px; }
.wm { position: absolute; z-index: 3; right: 9px; bottom: 9px; display: flex; opacity: .65; pointer-events: none; }
.wm div { display: flex; flex-direction: column; width: 107px; }
.wm b { font-size: 21px; line-height: 24px; color: #1f66b0; }
.wm strong { font: 700 16px/18px "Liberation Sans", sans-serif; color: #2ca048; white-space: nowrap; }
</style>
